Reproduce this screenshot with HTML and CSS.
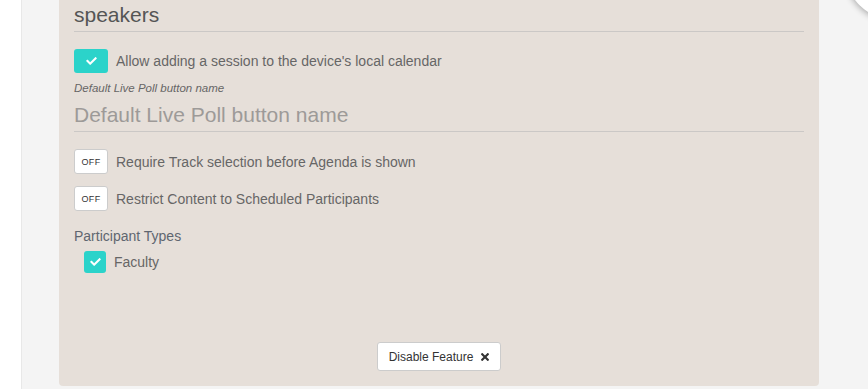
FILE: index.html
```html
<!DOCTYPE html>
<html lang="en">
<head>
    <meta charset="UTF-8">
    <meta name="viewport" content="width=device-width, initial-scale=1.0">
    <title>Feature Settings</title>
    <link rel="stylesheet" href="styles.css">
</head>
<body>
    <div class="sidebar"></div>
    <div class="content">
        <div class="panel">
            <h2 class="panel-title">speakers</h2>

            <div class="option-row first">
                <span class="switch on">
                    <svg class="check" viewBox="0 64 512 384"><path d="M173.898 439.404l-166.4-166.4c-9.997-9.997-9.997-26.206 0-36.204l36.203-36.204c9.997-9.998 26.207-9.998 36.204 0L192 312.69 432.095 72.596c9.997-9.997 26.207-9.997 36.204 0l36.203 36.204c9.997 9.997 9.997 26.206 0 36.204l-294.4 294.401c-9.998 9.997-26.207 9.997-36.204-.001z"/></svg>
                </span>
                <span class="option-text">Allow adding a session to the device's local calendar</span>
            </div>

            <label class="field-label" for="poll-name">Default Live Poll button name</label>
            <input class="field-input" type="text" id="poll-name" placeholder="Default Live Poll button name">

            <div class="option-row off-first">
                <span class="switch off">OFF</span>
                <span class="option-text">Require Track selection before Agenda is shown</span>
            </div>
            <div class="option-row off-second">
                <span class="switch off">OFF</span>
                <span class="option-text">Restrict Content to Scheduled Participants</span>
            </div>

            <div class="group-title">Participant Types</div>
            <div class="type-row">
                <span class="box">
                    <svg class="check" viewBox="0 64 512 384"><path d="M173.898 439.404l-166.4-166.4c-9.997-9.997-9.997-26.206 0-36.204l36.203-36.204c9.997-9.998 26.207-9.998 36.204 0L192 312.69 432.095 72.596c9.997-9.997 26.207-9.997 36.204 0l36.203 36.204c9.997 9.997 9.997 26.206 0 36.204l-294.4 294.401c-9.998 9.997-26.207 9.997-36.204-.001z"/></svg>
                </span>
                <span class="type-text">Faculty</span>
            </div>

            <div class="panel-footer">
                <button class="disable-btn" type="button">Disable Feature
                    <svg class="times" viewBox="0 80 352 352"><path d="M242.72 256l100.07-100.07c12.28-12.28 12.28-32.190 0-44.48l-22.24-22.24c-12.28-12.28-32.19-12.28-44.48 0L176 189.28 75.93 89.21c-12.28-12.28-32.19-12.28-44.48 0L9.21 111.45c-12.28 12.28-12.28 32.19 0 44.48L109.28 256 9.21 356.07c-12.28 12.28-12.28 32.19 0 44.48l22.24 22.24c12.28 12.28 32.2 12.28 44.48 0L176 322.72l100.07 100.07c12.28 12.28 32.2 12.28 44.48 0l22.24-22.24c12.28-12.28 12.28-32.19 0-44.48L242.72 256z"/></svg>
                </button>
            </div>
        </div>
        <div class="fab"></div>
    </div>
</body>
</html>
```

FILE: styles.css
```css
body {
    font-family: "Liberation Sans", Arial, sans-serif;
    margin: 0;
    padding: 0;
    display: flex;
    height: 389px;
    overflow: hidden;
    background-color: #fff;
    color: #666;
}
.sidebar {
    width: 21px;
    background-color: #fff;
}
.content {
    flex: 1;
    position: relative;
    overflow: hidden;
    background-color: #f4f4f4;
    border-left: 1px solid #e8e8e8;
    padding-left: 37px;
}
.panel {
    width: 760px;
    height: 386px;
    box-sizing: border-box;
    background-color: #e6dfd9;
    border-radius: 0 0 4px 4px;
    padding: 3px 15px 15px;
    display: flex;
    flex-direction: column;
}
.panel-title {
    margin: 0;
    font-size: 21px;
    font-weight: normal;
    line-height: 24px;
    color: #555;
    padding-bottom: 4px;
    border-bottom: 1px solid #cbc8c6;
}
.option-row {
    display: flex;
    align-items: center;
    gap: 8px;
}
.option-row.first {
    margin-top: 17px;
}
.option-row.off-first {
    margin-top: 17px;
}
.option-row.off-second {
    margin-top: 12px;
}
.switch {
    width: 34px;
    height: 24px;
    box-sizing: border-box;
    border-radius: 3px;
    display: flex;
    align-items: center;
    justify-content: center;
    flex-shrink: 0;
}
.switch.on {
    background-color: #2bd3ca;
}
.switch.off {
    height: 25px;
    background-color: #fff;
    border: 1px solid #ccc;
    font-size: 9px;
    letter-spacing: 0.3px;
    color: #333;
}
.check {
    width: 11px;
    height: 8px;
    fill: #fff;
}
.option-text {
    font-size: 14px;
    color: #666;
}
.field-label {
    margin-top: 8px;
    font-size: 11.5px;
    line-height: 14px;
    font-style: italic;
    color: #666;
}
.field-input {
    margin-top: 8px;
    font-family: inherit;
    font-size: 21px;
    line-height: 24px;
    height: 29px;
    box-sizing: border-box;
    padding: 0 0 4px;
    border: none;
    border-bottom: 1px solid #cbc8c6;
    background: transparent;
    outline: none;
}
.field-input::placeholder {
    color: #9d9a98;
}
.group-title {
    margin-top: 16px;
    font-size: 14px;
    line-height: 18px;
    color: #5f6670;
}
.type-row {
    margin-top: 6px;
    margin-left: 10px;
    display: flex;
    align-items: center;
    gap: 8px;
}
.box {
    width: 22px;
    height: 22px;
    border-radius: 3px;
    background-color: #2bd3ca;
    display: flex;
    align-items: center;
    justify-content: center;
}
.type-text {
    font-size: 14px;
    color: #666;
}
.panel-footer {
    margin-top: auto;
    display: flex;
    justify-content: center;
}
.disable-btn {
    font-family: inherit;
    font-size: 12px;
    color: #333;
    white-space: nowrap;
    background-color: #fff;
    border: 1px solid #ccc;
    border-radius: 3px;
    height: 29px;
    padding: 0 11px;
    display: flex;
    align-items: center;
    gap: 8px;
    cursor: pointer;
}
.times {
    width: 8px;
    height: 8px;
    fill: #333;
}
.fab {
    position: absolute;
    left: 823px;
    top: -80px;
    width: 100px;
    height: 100px;
    border-radius: 50%;
    background-color: #fff;
    box-shadow: 0 2px 6px rgba(0, 0, 0, 0.3);
}
```
